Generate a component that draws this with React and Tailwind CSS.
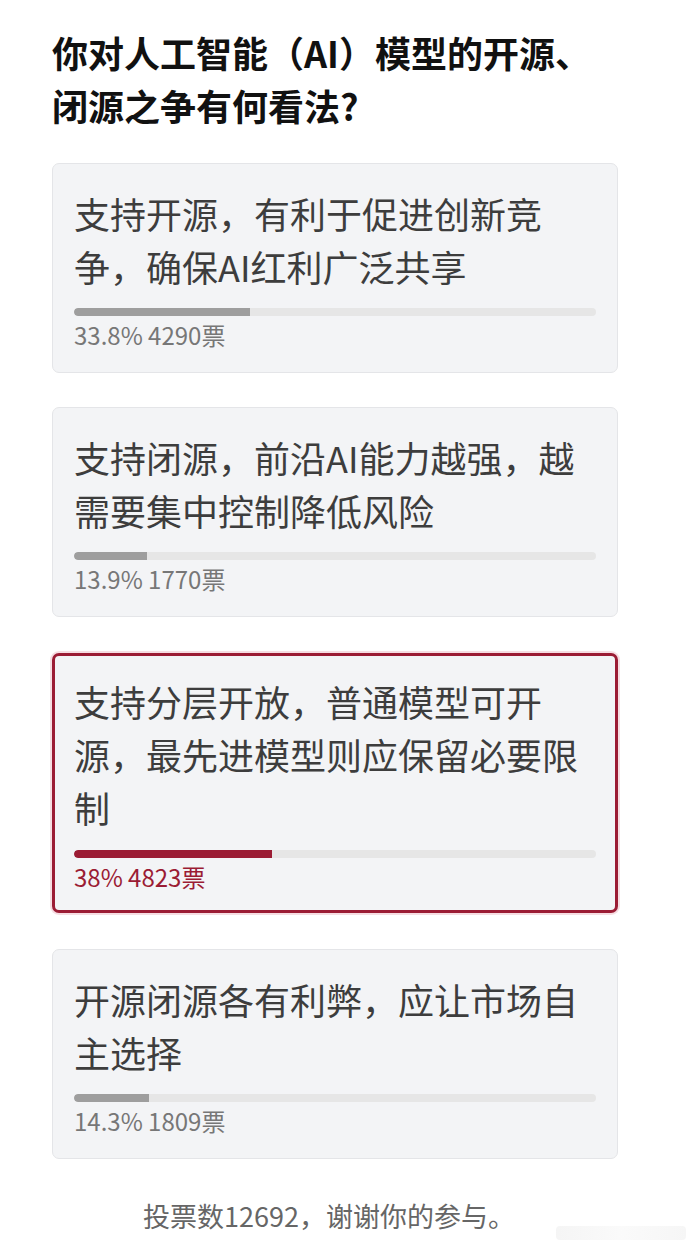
import React from "react";

const options = [
  { text: "支持开源，有利于促进创新竞争，确保AI红利广泛共享", pct: 33.8, label: "33.8% 4290票" },
  { text: "支持闭源，前沿AI能力越强，越需要集中控制降低风险", pct: 13.9, label: "13.9% 1770票" },
  { text: "支持分层开放，普通模型可开源，最先进模型则应保留必要限制", pct: 38, label: "38% 4823票", selected: true },
  { text: "开源闭源各有利弊，应让市场自主选择", pct: 14.3, label: "14.3% 1809票" },
];

export default function App() {
  return (
    <div
      className="relative min-h-[1250px] w-[688px] bg-white"
      style={{ fontFamily: '"Noto Sans CJK SC", "Noto Sans", sans-serif' }}
    >
      <div className="ml-[52px] w-[566px] pt-[26px]">
        <h1 className="w-[550px] text-[36px] font-bold leading-[53px] text-[#111]">
          你对人工智能（AI）模型的开源、闭源之争有何看法?
        </h1>
        <div className="mt-[31px] flex flex-col gap-[34px]">
          {options.map((o, i) => (
            <div
              key={i}
              className={
                o.selected
                  ? "my-[2px] rounded-[7px] border-[3px] border-[#9b1c34] bg-[#f3f4f6] px-[19px] pt-[19px] pb-[18px] shadow-[0_0_0_2px_#f6dde2]"
                  : "rounded-[7px] border border-[#e4e5e8] bg-[#f3f4f6] px-[21px] pt-[23px] pb-[22px]"
              }
            >
              <div className="text-[36px] leading-[53px] text-[#3d3d3d]">{o.text}</div>
              <div
                className={
                  o.selected
                    ? "mt-[16px] h-[8px] w-full overflow-hidden rounded-full bg-[#e6e6e6]"
                    : "mt-[15px] h-[8px] w-full overflow-hidden rounded-full bg-[#e6e6e6]"
                }
              >
                <div
                  className={o.selected ? "h-full rounded-l-full bg-[#9b1c34]" : "h-full rounded-l-full bg-[#9e9e9e]"}
                  style={{ width: `${o.pct}%` }}
                />
              </div>
              <div
                className={
                  o.selected
                    ? "mt-[4px] text-[24px] leading-[30px] text-[#9b1c34]"
                    : "mt-[4px] text-[24px] leading-[30px] text-[#777]"
                }
              >
                {o.label}
              </div>
            </div>
          ))}
        </div>
        <div className="mt-[40px] pr-[12px] text-center text-[27px] leading-[34px] text-[#666]">
          投票数12692，谢谢你的参与。
        </div>
      </div>
      <div className="absolute left-[556px] top-[1226px] h-[14px] w-[130px] rounded-sm bg-gradient-to-r from-[#eeeeee] via-[#f7f7f7] to-[#f0f0f0] opacity-60" />
    </div>
  );
}
